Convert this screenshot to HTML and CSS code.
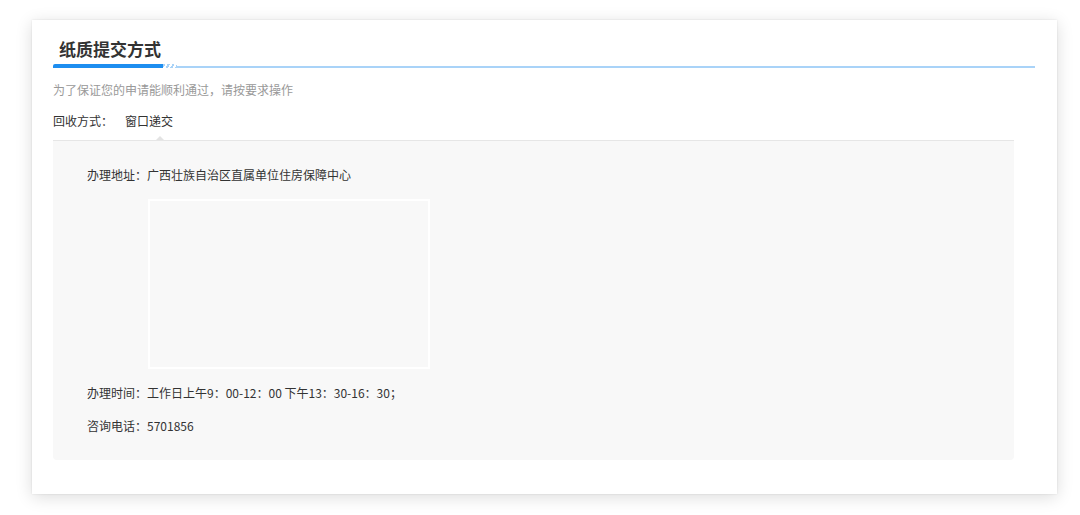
FILE: index.html
```html
<!DOCTYPE html>
<html lang="zh-CN">
<head>
    <meta charset="UTF-8">
    <meta name="viewport" content="width=device-width, initial-scale=1.0">
    <title>纸质提交方式</title>
    <link rel="stylesheet" href="styles.css">
</head>
<body>

    <div class="card">
        <div class="section-title">
            <h3>纸质提交方式</h3>
        </div>
        <p class="tip">为了保证您的申请能顺利通过，请按要求操作</p>

        <div class="tabs">
            <span class="tabs-label">回收方式：</span>
            <span class="tab active">窗口递交</span>
        </div>

        <div class="panel">
            <div class="row">办理地址：广西壮族自治区直属单位住房保障中心</div>
            <div class="map"></div>
            <div class="row">办理时间：工作日上午9：00-12：00 下午13：30-16：30；</div>
            <div class="row">咨询电话：5701856</div>
        </div>
    </div>

</body>
</html>
```

FILE: styles.css
```css
body {
    font-family: "Noto Sans CJK SC", "Noto Sans", sans-serif;
    background: #fff;
    margin: 0;
    padding: 0 0 21px;
    color: #333;
}

.card {
    box-sizing: border-box;
    width: 1025px;
    height: 474px;
    margin: 20px 0 0 32px;
    padding: 17px 22px 0 21px;
    background: #fff;
    box-shadow: 0 3px 16px rgba(0, 0, 0, 0.14), 0 0 2px rgba(0, 0, 0, 0.1);
}

/* 标题 + 蓝色下划线 */
.section-title {
    position: relative;
    height: 29px;
    border-bottom: 2px solid #a9d3f8;
}

.section-title h3 {
    margin: 0;
    padding-left: 6px;
    font-size: 17px;
    line-height: 24px;
    font-weight: bold;
    color: #333;
}

.section-title::after {
    content: "";
    position: absolute;
    left: 0;
    bottom: -2px;
    width: 124px;
    height: 4px;
    background:
        repeating-linear-gradient(-60deg, #a9d3f8 0 2px, #fff 2px 4px) 110px 0 / 14px 4px no-repeat,
        linear-gradient(#1d8ef0, #1d8ef0) 0 0 / 110px 4px no-repeat;
    border-radius: 2px 0 0 0;
}

.tip {
    margin: 12px 0 0;
    font-size: 12px;
    line-height: 20px;
    color: #999;
}

.tabs {
    display: flex;
    margin-top: 11px;
    padding-bottom: 9px;
    font-size: 12px;
    line-height: 20px;
}

.tabs-label {
    width: 72px;
}

.tab.active {
    position: relative;
}

.tab.active::after {
    content: "";
    position: absolute;
    left: 31px;
    bottom: -9px;
    border: 4px solid transparent;
    border-bottom-color: #e3e3e3;
    border-top-width: 0;
}

.panel {
    width: 961px;
    padding: 24px 0 24px 34px;
    box-sizing: border-box;
    background: #f8f8f8;
    border-top: 1px solid #e6e6e6;
    border-radius: 0 0 4px 4px;
    font-size: 12px;
    line-height: 20px;
}

.map {
    width: 282px;
    height: 170px;
    box-sizing: border-box;
    margin: 14px 0 14px 61px;
    border: 2px solid #fff;
}

.row + .row {
    margin-top: 13px;
}
```
